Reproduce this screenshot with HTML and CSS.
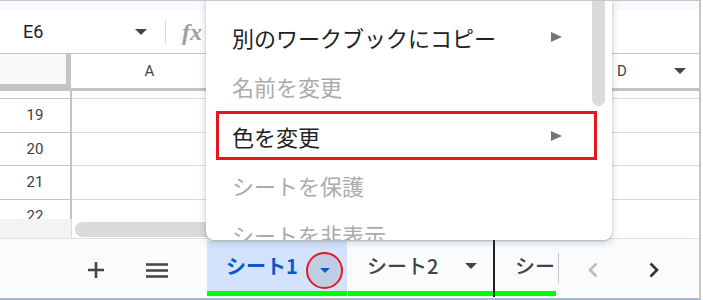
FILE: index.html
```html
<!DOCTYPE html>
<html lang="ja">
<head>
<meta charset="utf-8">
<link rel="stylesheet" href="styles.css">
</head>
<body>
<div class="screen">
  <div class="topstrip"></div>
  <div class="formula">
    <div class="namebox"><span class="cellref">E6</span><span class="caret dark"></span></div>
    <div class="sep"></div>
    <span class="fx">fx</span>
  </div>
  <div class="colhead">
    <div class="corner"></div>
    <div class="col col-a">A</div>
    <div class="col col-fill"></div>
    <div class="col col-d"><span>D</span><span class="caret dark"></span></div>
  </div>
  <div class="grid">
    <div class="row stub"><div class="rh"></div><div class="cells"></div></div>
    <div class="row"><div class="rh">19</div><div class="cells"></div></div>
    <div class="row"><div class="rh">20</div><div class="cells"></div></div>
    <div class="row"><div class="rh">21</div><div class="cells"></div></div>
    <div class="row"><div class="rh">22</div><div class="cells"></div></div>
  </div>
  <div class="hscroll">
    <div class="hs-left"></div>
    <div class="hs-thumb"></div>
  </div>
  <div class="tabbar">
    <div class="tb-left">
      <svg class="ic-plus" width="16" height="16" viewBox="0 0 16 16"><path d="M8 0V16M0 8H16" stroke="#444" stroke-width="2.6" fill="none"/></svg>
      <svg class="ic-menu" width="22" height="15" viewBox="0 0 22 15"><path d="M0 1.5H22M0 7.5H22M0 13.5H22" stroke="#444" stroke-width="2.6" fill="none"/></svg>
    </div>
    <div class="tab tab-active">
      <span class="tab-name">シート1</span>
      <span class="tab-drop"><span class="caret blue"></span></span>
    </div>
    <div class="tab tab-2">
      <span class="tab-name">シート2</span>
      <span class="caret dark"></span>
    </div>
    <div class="tab tab-3"><span class="tab-name">シート3</span></div>
    <div class="clip-line"></div>
    <svg class="chev chev-l" width="12" height="16" viewBox="0 0 12 16"><path d="M9.5 1.5L3 8L9.5 14.5" stroke="#bdbdbd" stroke-width="2.6" fill="none"/></svg>
    <svg class="chev chev-r" width="12" height="16" viewBox="0 0 12 16"><path d="M2.5 1.5L9 8L2.5 14.5" stroke="#333" stroke-width="2.6" fill="none"/></svg>
  </div>

  <div class="menu">
    <div class="menu-scroll"></div>
    <div class="item"><span>別のワークブックにコピー</span><span class="arrow"></span></div>
    <div class="item disabled"><span>名前を変更</span></div>
    <div class="item marked"><span>色を変更</span><span class="arrow"></span></div>
    <div class="item disabled"><span>シートを保護</span></div>
    <div class="item disabled"><span>シートを非表示</span></div>
  </div>
</div>
</body>
</html>
```
FILE: styles.css
```css
* { box-sizing: border-box; }
html, body { margin: 0; padding: 0; background: #fff; }

.screen {
  position: relative;
  width: 701px;
  height: 300px;
  overflow: hidden;
  background: #fff;
  border-top: 1px solid #c6c6c6;
  border-right: 2px solid #c6c6c6;
  border-bottom: 2px solid #a9bad3;
  font-family: Roboto, "Noto Sans CJK JP", sans-serif;
}

.topstrip { height: 9px; background: #f8fafd; }

.formula {
  height: 44px;
  border-bottom: 1px solid #c7c7c7;
  display: flex;
  align-items: center;
}
.namebox {
  width: 147px;
  padding-left: 23px;
  display: flex;
  align-items: center;
  justify-content: space-between;
}
.cellref { font-size: 18px; color: #202124; }
.sep { width: 1px; height: 24px; background: #dadce0; margin-left: 18px; }
.fx {
  margin-left: 16px;
  font-family: "Liberation Serif", serif;
  font-style: italic;
  font-weight: bold;
  font-size: 24px;
  color: #a0a0a0;
  line-height: 1;
}

.caret {
  width: 0; height: 0;
  border-left: 6px solid transparent;
  border-right: 6px solid transparent;
  border-top: 6px solid #444;
}
.caret.dark { border-top-color: #444; }
.caret.blue { border-left-width: 5px; border-right-width: 5px; border-top: 5px solid #0b57d0; }

.colhead { height: 37px; display: flex; }
.corner {
  width: 71px;
  background: #f8f9fa;
  border-right: 5px solid #c4c4c4;
  border-bottom: 7px solid #c4c4c4;
}
.col {
  border-bottom: 3px solid #c4c4c4;
  display: flex;
  align-items: center;
  font-size: 15px;
  color: #444;
}
.col-a { width: 157px; justify-content: center; }
.col-fill { flex: 1; }
.col-d { width: 88px; padding-left: 6px; padding-right: 13px; justify-content: space-between; }

.grid { height: 128px; overflow: hidden; }
.row { height: 33.5px; display: flex; }
.row.stub { height: 8px; }
.rh {
  width: 72px;
  border-right: 2px solid #c4c4c4;
  border-bottom: 1px solid #c4c4c4;
  display: flex;
  align-items: center;
  justify-content: center;
  font-size: 15px;
  color: #3c4043;
}
.cells { flex: 1; border-bottom: 1px solid #dcdcdc; }

.hscroll { height: 19px; display: flex; }
.hs-left { width: 72px; background: #f3f3f3; border-right: 1px solid #dcdcdc; }
.hs-thumb {
  margin-left: 3px;
  margin-top: 3px;
  width: 400px;
  height: 15px;
  border-radius: 8px;
  background: #dadada;
}

.tabbar {
  height: 59px;
  border-top: 1px solid #dde1e6;
  background: #f9fbfd;
  display: flex;
  align-items: flex-start;
  padding-top: 2px;
  font-family: "Noto Sans CJK JP", sans-serif;
}
.tb-left {
  width: 207px;
  height: 55px;
  display: flex;
  align-items: center;
  padding-top: 3px;
}
.ic-plus { margin-left: 88px; }
.ic-menu { margin-left: 42px; }

.tab {
  height: 55px;
  border-bottom: 5px solid #00ff00;
  display: flex;
  align-items: center;
  justify-content: space-between;
}
.tab-name { font-size: 20px; line-height: 1; white-space: nowrap; }
.tab-active {
  width: 140px;
  margin-right: 1px;
  background: #d3e3fd;
  padding-left: 19px;
  padding-right: 4px;
}
.tab-active .tab-name { color: #0b57d0; font-weight: 700; }
.tab-drop {
  width: 37px;
  height: 37px;
  margin-top: 8px;
  border: 2.5px solid #e31b23;
  border-radius: 50%;
  background: #c0cde2;
  display: flex;
  align-items: center;
  justify-content: center;
}
.tab-2 {
  position: relative;
  width: 147px;
  padding-left: 19px;
  padding-right: 18px;
}
.tab-2 .tab-name { color: #444; font-weight: 500; }
.tab-2::after {
  content: "";
  position: absolute;
  right: 0;
  top: -1px;
  bottom: -6px;
  width: 2px;
  background: #202124;
}
.tab-3 {
  width: 61px;
  padding-left: 20px;
  overflow: hidden;
  justify-content: flex-start;
}
.tab-3 .tab-name { color: #444; font-weight: 500; }
.clip-line { width: 1px; height: 30px; margin-left: 2px; margin-top: 12px; background: #c8c8c8; }
.chev { margin-top: 21px; }
.chev-l { margin-left: 28px; }
.chev-r { margin-left: 49px; }

.menu {
  position: absolute;
  left: 206px;
  top: 0;
  width: 406px;
  height: 239px;
  background: #fff;
  border-radius: 0 0 8px 8px;
  box-shadow: 0 2px 6px 2px rgba(60,64,67,.15), 0 1px 2px rgba(60,64,67,.3);
  padding-top: 11px;
  overflow: hidden;
  font-family: "Noto Sans CJK JP", sans-serif;
}
.menu-scroll {
  position: absolute;
  left: 386px;
  top: -8px;
  width: 13px;
  height: 113px;
  border-radius: 7px;
  background: #dadada;
}
.item {
  height: 49.5px;
  display: flex;
  align-items: center;
  justify-content: space-between;
  padding-left: 26px;
  padding-right: 50px;
  font-size: 22px;
  color: #202124;
}
.item span:first-child { line-height: 1; }
.item.disabled { color: #ababab; }
.item.marked {
  height: 49px;
  margin: 0 15px 0 10px;
  border: 3px solid #e4161f;
  padding-left: 13px;
  padding-right: 32px;
}
.arrow {
  width: 0; height: 0;
  border-left: 11px solid #757575;
  border-top: 5px solid transparent;
  border-bottom: 5px solid transparent;
}
```
